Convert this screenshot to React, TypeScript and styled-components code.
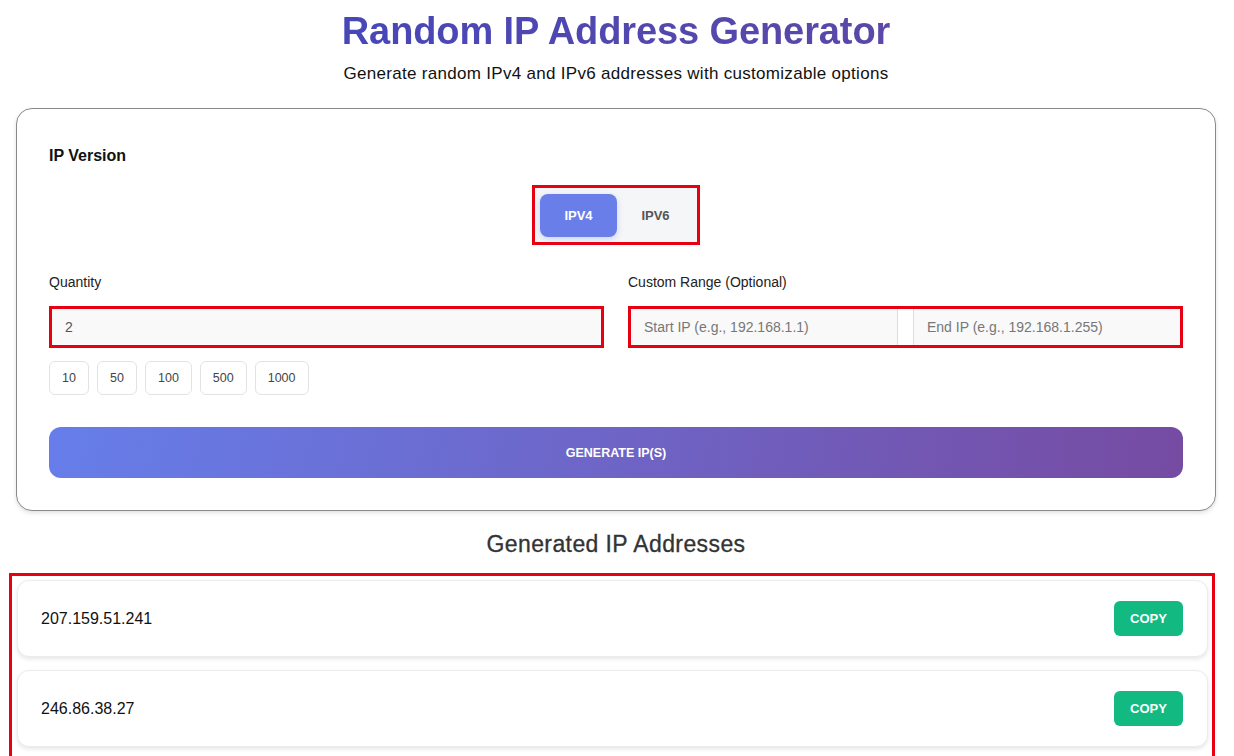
import React, { useState } from "react";
import styled, { createGlobalStyle } from "styled-components";

const GlobalStyle = createGlobalStyle`
  html, body {
    margin: 0;
    padding: 0;
    background: #ffffff;
    font-family: "Liberation Sans", Arial, Helvetica, sans-serif;
    color: #111;
  }
  * { box-sizing: border-box; }
`;

const Page = styled.div`
  width: 1200px;
  margin-left: 16px;
  display: flex;
  flex-direction: column;
`;

const Header = styled.header`
  display: flex;
  flex-direction: column;
  align-items: center;
  padding-top: 9px;
`;

const Title = styled.h1`
  margin: 0;
  font-size: 38px;
  line-height: 44px;
  font-weight: 700;
  letter-spacing: -0.1px;
  background: linear-gradient(90deg, #4747b8 0%, #5b48a8 100%);
  -webkit-background-clip: text;
  background-clip: text;
  color: transparent;
`;

const Subtitle = styled.p`
  margin: 11px 0 0;
  font-size: 17px;
  line-height: 20px;
  letter-spacing: 0.3px;
  color: #111;
`;

const Card = styled.section`
  margin-top: 24px;
  border: 1px solid #8a8a8a;
  border-radius: 16px;
  background: #fff;
  box-shadow: 0 2px 4px rgba(0, 0, 0, 0.12);
  padding: 37px 32px 32px;
  display: flex;
  flex-direction: column;
`;

const SectionLabel = styled.div`
  font-size: 16px;
  line-height: 20px;
  font-weight: 700;
  color: #111;
`;

const ToggleRow = styled.div`
  display: flex;
  justify-content: center;
  margin-top: 19px;
`;

const ToggleGroup = styled.div`
  display: flex;
  padding: 5.5px 3px 5.5px 5px;
  background: #f5f6f8;
  border: 3px solid #e60012;
`;

const ToggleButton = styled.button<{ $active?: boolean }>`
  width: 77px;
  height: 43px;
  border: none;
  border-radius: 8px;
  font-family: inherit;
  font-size: 13px;
  font-weight: 700;
  cursor: pointer;
  background: ${(p) => (p.$active ? "#6a7ee9" : "transparent")};
  color: ${(p) => (p.$active ? "#ffffff" : "#555")};
  box-shadow: ${(p) => (p.$active ? "0 2px 6px rgba(102,126,234,0.3)" : "none")};
`;

const Grid = styled.div`
  display: grid;
  grid-template-columns: 1fr 1fr;
  column-gap: 24px;
  margin-top: 29px;
`;

const Field = styled.div`
  display: flex;
  flex-direction: column;
`;

const FieldLabel = styled.label`
  font-size: 14px;
  line-height: 17px;
  color: #222;
  margin-bottom: 15px;
`;

const Marked = styled.div`
  border: 3px solid #e60012;
  display: flex;
  gap: 15px;
  background: #fff;
`;

const TextInput = styled.input<{ $edge?: "left" | "right" | "none" }>`
  flex: 1;
  min-width: 0;
  height: 36px;
  border: none;
  border-left: ${(p) => (p.$edge === "left" ? "1px solid #ddd" : "none")};
  border-right: ${(p) => (p.$edge === "right" ? "1px solid #ddd" : "none")};
  background: #f9f9f9;
  padding: 0 13px;
  font-family: inherit;
  font-size: 14px;
  color: #555;
  outline: none;
  &::placeholder {
    color: #777;
  }
`;

const Presets = styled.div`
  display: flex;
  gap: 8px;
  margin-top: 13px;
`;

const PresetButton = styled.button`
  height: 34px;
  padding: 0 12px;
  min-width: 40px;
  border: 1px solid #e3e3e3;
  border-radius: 6px;
  background: #fff;
  font-family: inherit;
  font-size: 12.5px;
  color: #444;
  cursor: pointer;
`;

const GenerateButton = styled.button`
  margin-top: 32px;
  height: 51px;
  border: none;
  border-radius: 12px;
  background: linear-gradient(100deg, #667eea 0%, #764ba2 100%);
  color: #fff;
  font-family: inherit;
  font-size: 12.5px;
  font-weight: 700;
  cursor: pointer;
`;

const ResultsTitle = styled.h2`
  margin: 19px 0 0;
  text-align: center;
  font-size: 23px;
  line-height: 28px;
  font-weight: 400;
  letter-spacing: 0.4px;
  color: #333;
  -webkit-text-stroke: 0.3px #333;
`;

const ResultList = styled.div`
  margin: 15px 1px 0 -7px;
  border: 3px solid #e60012;
  border-bottom: none;
  padding: 4px 4px 0 5px;
  display: flex;
  flex-direction: column;
  gap: 13px;
  height: 183px;
  overflow: hidden;
`;

const ResultItem = styled.div`
  flex-shrink: 0;
  display: flex;
  align-items: center;
  justify-content: space-between;
  height: 77px;
  padding: 0 24px 0 23px;
  border: 1px solid #ececec;
  border-radius: 12px;
  background: #fff;
  box-shadow: 0 2px 4px rgba(0, 0, 0, 0.1);
`;

const IpText = styled.span`
  font-size: 16px;
  color: #111;
`;

const CopyButton = styled.button`
  width: 69px;
  height: 35px;
  border: none;
  border-radius: 6px;
  background: #12b981;
  color: #fff;
  font-family: inherit;
  font-size: 13px;
  font-weight: 700;
  cursor: pointer;
`;

const BottomFrame = styled.div`
  margin: 0 1px 0 -7px;
  height: 3px;
  background: #e60012;
`;

export default function App() {
  const [version, setVersion] = useState<"v4" | "v6">("v4");
  const ips = ["207.159.51.241", "246.86.38.27"];
  return (
    <>
      <GlobalStyle />
      <Page>
        <Header>
          <Title>Random IP Address Generator</Title>
          <Subtitle>Generate random IPv4 and IPv6 addresses with customizable options</Subtitle>
        </Header>
        <Card>
          <SectionLabel>IP Version</SectionLabel>
          <ToggleRow>
            <ToggleGroup>
              <ToggleButton $active={version === "v4"} onClick={() => setVersion("v4")}>
                IPV4
              </ToggleButton>
              <ToggleButton $active={version === "v6"} onClick={() => setVersion("v6")}>
                IPV6
              </ToggleButton>
            </ToggleGroup>
          </ToggleRow>
          <Grid>
            <Field>
              <FieldLabel>Quantity</FieldLabel>
              <Marked>
                <TextInput $edge="none" defaultValue="2" />
              </Marked>
              <Presets>
                {["10", "50", "100", "500", "1000"].map((n) => (
                  <PresetButton key={n}>{n}</PresetButton>
                ))}
              </Presets>
            </Field>
            <Field>
              <FieldLabel>Custom Range (Optional)</FieldLabel>
              <Marked>
                <TextInput $edge="right" placeholder="Start IP (e.g., 192.168.1.1)" />
                <TextInput $edge="left" placeholder="End IP (e.g., 192.168.1.255)" />
              </Marked>
            </Field>
          </Grid>
          <GenerateButton>GENERATE IP(S)</GenerateButton>
        </Card>
        <ResultsTitle>Generated IP Addresses</ResultsTitle>
        <ResultList>
          {ips.map((ip) => (
            <ResultItem key={ip}>
              <IpText>{ip}</IpText>
              <CopyButton>COPY</CopyButton>
            </ResultItem>
          ))}
        </ResultList>
        <BottomFrame />
      </Page>
    </>
  );
}
